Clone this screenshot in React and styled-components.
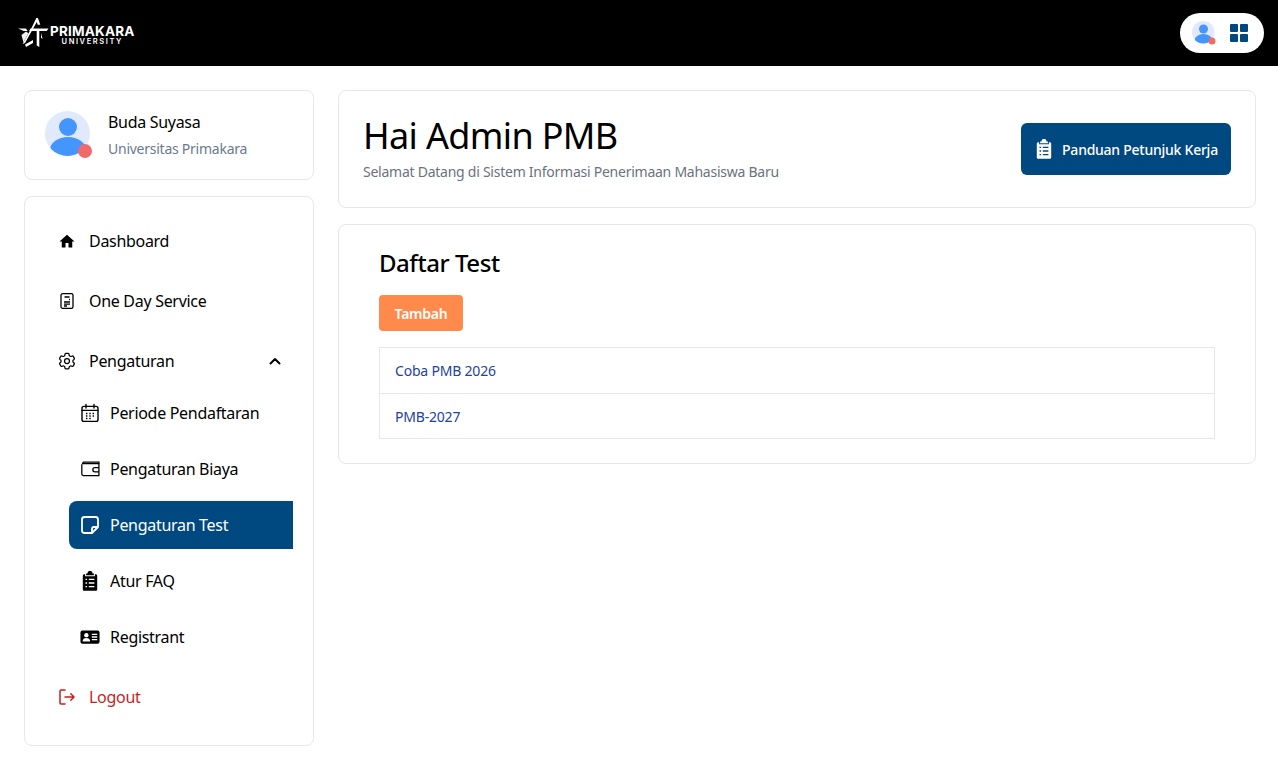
import React from 'react';
import styled, { createGlobalStyle } from 'styled-components';

const GlobalStyle = createGlobalStyle`
  * { box-sizing: border-box; }
  html, body { margin: 0; padding: 0; background: #fff; }
  body { font-family: "Noto Sans", "Liberation Sans", sans-serif; color: #000; }
`;

const TopBar = styled.header`
  height: 66px;
  background: #000;
  display: flex;
  align-items: center;
  justify-content: space-between;
  padding: 0 14px 0 18px;
`;

const Logo = styled.div`
  display: flex;
  align-items: center;
  gap: 1px;
  color: #fff;
`;

const LogoWords = styled.div`
  display: flex;
  flex-direction: column;
  align-items: center;
  margin-top: 3px;
`;

const LogoName = styled.span`
  font-family: "Inter", sans-serif;
  font-size: 13.5px;
  line-height: 14px;
  font-weight: 700;
  letter-spacing: 0.2px;
`;

const LogoSub = styled.span`
  font-family: "Inter", sans-serif;
  font-size: 7.5px;
  line-height: 8px;
  font-weight: 600;
  letter-spacing: 1.6px;
`;

const TopPill = styled.div`
  width: 84px;
  height: 40px;
  background: #fff;
  border-radius: 20px;
  display: flex;
  align-items: center;
  gap: 14px;
  padding-left: 12px;
`;

const Page = styled.main`
  display: grid;
  grid-template-columns: 290px 1fr;
  gap: 24px;
  padding: 24px 22px 17px 24px;
  align-items: start;
`;

const Card = styled.section`
  background: #fff;
  border: 1px solid #e5e7eb;
  border-radius: 8px;
`;

const Side = styled.aside`
  display: flex;
  flex-direction: column;
  gap: 16px;
`;

const ProfileCard = styled(Card)`
  height: 90px;
  display: flex;
  align-items: center;
  gap: 15px;
  padding: 0 20px;
`;

const ProfileName = styled.div`
  font-size: 16px;
  line-height: 24px;
  letter-spacing: -0.3px;
  margin-bottom: 3px;
`;

const ProfileOrg = styled.div`
  font-size: 14px;
  line-height: 24px;
  letter-spacing: -0.25px;
  color: #6b7a8f;
`;

const NavCard = styled(Card)`
  height: 550px;
  padding: 20px 20px 0 32px;
`;

const NavItem = styled.div`
  height: 48px;
  margin-bottom: 12px;
  display: flex;
  align-items: center;
  gap: 12px;
  font-size: 16px;
  letter-spacing: -0.3px;
  color: ${p => (p.$danger ? '#c81e1e' : '#000')};
`;

const NavChevron = styled.span`
  margin-left: auto;
  display: flex;
  margin-right: 11px;
`;

const SubNav = styled.div`
  margin: -8px 0 12px 12px;
  display: flex;
  flex-direction: column;
  gap: 8px;
`;

const SubItem = styled.div`
  height: 48px;
  display: flex;
  align-items: center;
  gap: 10px;
  padding-left: 11px;
  font-size: 16px;
  letter-spacing: -0.3px;
  border-radius: 8px 0 0 8px;
  color: ${p => (p.$active ? '#fff' : '#000')};
  background: ${p => (p.$active ? '#004880' : 'transparent')};
`;

const IconBox = styled.span`
  width: 20px;
  height: 20px;
  flex: none;
  display: flex;
  align-items: center;
  justify-content: center;
`;

const Content = styled.div`
  display: flex;
  flex-direction: column;
  gap: 16px;
`;

const HeroCard = styled(Card)`
  height: 118px;
  display: flex;
  align-items: center;
  justify-content: space-between;
  padding: 0 24px;
`;

const HeroTitle = styled.h1`
  margin: 0 0 6px;
  font-size: 36px;
  line-height: 40px;
  font-weight: 400;
  letter-spacing: -0.65px;
`;

const HeroText = styled.p`
  margin: 0;
  font-size: 14px;
  line-height: 20px;
  letter-spacing: -0.25px;
  color: #6b7280;
`;

const GuideButton = styled.button`
  width: 210px;
  height: 52px;
  border: 0;
  border-radius: 6px;
  background: #004880;
  color: #fff;
  font: 500 14px "Noto Sans", sans-serif;
  letter-spacing: -0.25px;
  display: flex;
  align-items: center;
  justify-content: center;
  gap: 8px;
`;

const ListCard = styled(Card)`
  padding: 22px 40px 24px;
`;

const ListTitle = styled.h2`
  margin: 0 0 16px;
  font-size: 24px;
  line-height: 32px;
  font-weight: 500;
  letter-spacing: -0.45px;
`;

const AddButton = styled.button`
  display: block;
  width: 84px;
  height: 36px;
  border: 0;
  border-radius: 4px;
  background: #ff8a4c;
  color: #fff;
  font: 600 14px "Noto Sans", sans-serif;
  letter-spacing: -0.25px;
  margin-bottom: 16px;
`;

const TestList = styled.ul`
  list-style: none;
  margin: 0;
  padding: 0;
  border: 1px solid #e5e7eb;
`;

const TestRow = styled.li`
  height: 45px;
  padding: 0 15px;
  display: flex;
  align-items: center;
  font-size: 14px;
  letter-spacing: -0.2px;
  color: #1e429f;
  & + & { border-top: 1px solid #e5e7eb; height: 45px; }
`;

const StarMark = () => (
  <svg width="31" height="31" viewBox="0 0 31 31" fill="#fff">
    <path d="M0 10.5h8l1.6 2.6-3.7 0z" />
    <path d="M3.5 17l4.5-3.6 2.4 1.8-5 9z" opacity="0.95" />
    <path d="M4.5 26l9.5-17L18.3 0h1.6l2.4 6.8h-2.6L18.8 4 7 25z" />
    <path d="M12.5 10.5h18l-1.8 2.6h-7.4V29l-2.6-1.6V13.1h-7.6z" />
    <path d="M23 15l1.6 6-1.6-1.2z" />
    <path d="M7 26.5l8-4.6v3L8 29z" />
  </svg>
);

const Avatar = ({ size }) => (
  <svg width={size} height={size} viewBox="0 0 48 48">
    <defs>
      <clipPath id={`avatar-${size}`}>
        <circle cx="22.5" cy="22.5" r="22.5" />
      </clipPath>
    </defs>
    <circle cx="22.5" cy="22.5" r="22.5" fill="#e1e9fd" />
    <g clipPath={`url(#avatar-${size})`}>
      <circle cx="23" cy="16" r="9" fill="#4595ff" />
      <ellipse cx="23" cy="39" rx="18" ry="13" fill="#4595ff" />
    </g>
    <circle cx="40" cy="40" r="7" fill="#f16a6a" />
  </svg>
);

const AppsIcon = () => (
  <svg width="18" height="18" viewBox="0 0 18 18" fill="#004880">
    <rect x="0" y="0" width="8" height="8" rx="1" />
    <rect x="10" y="0" width="8" height="8" rx="1" />
    <rect x="0" y="10" width="8" height="8" rx="1" />
    <rect x="10" y="10" width="8" height="8" rx="1" />
  </svg>
);

const HomeIcon = () => (
  <svg width="18" height="18" viewBox="0 0 24 24" fill="#000">
    <path d="M10 20.5v-6h4v6h5v-8h3L12 3.5 2 12.5h3v8z" />
  </svg>
);

const DocIcon = () => (
  <svg width="18" height="18" viewBox="0 0 18 18" fill="none" stroke="#000" strokeWidth="1.3">
    <rect x="3" y="1.7" width="12" height="14.6" rx="1.6" />
    <path d="M6.5 5h5M11 7.5h1M6 10h6M6 12.2h6M6 14h3" />
  </svg>
);

const GearIcon = () => (
  <svg width="20" height="20" viewBox="0 0 24 24" fill="none" stroke="#000" strokeWidth="1.5" strokeLinecap="round" strokeLinejoin="round">
    <path d="M9.6 3.9c.1-.6.6-1 1.2-1h2.4c.6 0 1.1.4 1.2 1l.2 1.2c.1.4.4.7.7.9l.5.3c.3.2.7.2 1.1.1l1.2-.4c.5-.2 1.1 0 1.4.5l1.2 2.1c.3.5.2 1.1-.2 1.5l-1 .8c-.3.2-.4.6-.4 1v.6c0 .4.2.8.4 1l1 .8c.4.4.5 1 .2 1.5l-1.2 2.1c-.3.5-.9.7-1.4.5l-1.2-.4c-.4-.1-.8-.1-1.1.1l-.5.3c-.3.2-.6.5-.7.9l-.2 1.2c-.1.6-.6 1-1.2 1h-2.4c-.6 0-1.1-.4-1.2-1l-.2-1.2c-.1-.4-.4-.7-.7-.9l-.5-.3c-.3-.2-.7-.2-1.1-.1l-1.2.4c-.5.2-1.1 0-1.4-.5l-1.2-2.1c-.3-.5-.2-1.1.2-1.5l1-.8c.3-.2.4-.6.4-1v-.6c0-.4-.2-.8-.4-1l-1-.8c-.4-.4-.5-1-.2-1.5l1.2-2.1c.3-.5.9-.7 1.4-.5l1.2.4c.4.1.8.1 1.1-.1l.5-.3c.3-.2.6-.5.7-.9z" />
    <circle cx="12" cy="12" r="3" />
  </svg>
);

const ChevronUp = () => (
  <svg width="14" height="14" viewBox="0 0 14 14" fill="none" stroke="#000" strokeWidth="2" strokeLinecap="round" strokeLinejoin="round">
    <path d="M2.5 9.5 7 5l4.5 4.5" />
  </svg>
);

const CalendarIcon = () => (
  <svg width="20" height="20" viewBox="0 0 20 20" fill="none" stroke="#000" strokeWidth="1.4">
    <rect x="2" y="3.4" width="16" height="15" rx="2" />
    <path d="M2 7.4h16M6 1.4v3.6M14 1.4v3.6" strokeLinecap="round" />
    <path d="M6 10.4h1.4M9.3 10.4h1.4M12.6 10.4h1.4M6 13h1.4M9.3 13h1.4M12.6 13h1.4M6 15.6h1.4M9.3 15.6h1.4" strokeWidth="1.5" />
  </svg>
);

const WalletIcon = () => (
  <svg width="22" height="20" viewBox="0 0 22 20" fill="none" stroke="#000" strokeWidth="1.4">
    <path d="M2.5 4.2h18.3v13H3.6a1.6 1.6 0 0 1-1.6-1.6V4.8" />
    <path d="M2.5 4.2 3.8 2.4h17v1.8" />
    <path d="M20.8 8.6h-4.4a2 2 0 0 0 0 4.6h4.4" />
  </svg>
);

const NoteIcon = () => (
  <svg width="20" height="20" viewBox="0 0 20 20" fill="none" stroke="#fff" strokeWidth="1.8" strokeLinejoin="round">
    <path d="M4.5 2h11A2.5 2.5 0 0 1 18 4.5V12l-6 6H4.5A2.5 2.5 0 0 1 2 15.5v-11A2.5 2.5 0 0 1 4.5 2z" />
    <path d="M18 12h-4a2 2 0 0 0-2 2v4" />
  </svg>
);

const ClipboardIcon = ({ color = '#000', size = 20 }) => (
  <svg width={size} height={size} viewBox="0 0 20 20">
    <path
      fill={color}
      d="M7.5 2.4a2.5 2.5 0 0 1 5 0h1.4v1.8H6.1V2.4zM4.4 3.2h.7V5.2h9.8V3.2h.7c.9 0 1.6.7 1.6 1.6v13.4c0 .9-.7 1.6-1.6 1.6H4.4c-.9 0-1.6-.7-1.6-1.6V4.8c0-.9.7-1.6 1.6-1.6z"
    />
    <g fill="none" stroke={color === '#fff' ? '#004880' : '#fff'} strokeWidth="1.4">
      <path d="M5.5 8.4h1.6M8.8 8.4h5.6M5.5 12h1.6M8.8 12h5.6M5.5 15.6h1.6M8.8 15.6h5.6" />
    </g>
  </svg>
);

const IdCardIcon = () => (
  <svg width="22" height="20" viewBox="0 0 22 20">
    <rect x="0.5" y="2.8" width="21" height="14.6" rx="2.2" fill="#000" />
    <circle cx="7" cy="8" r="2.4" fill="#fff" />
    <path d="M2.8 15c0-2.8 1.9-4 4.2-4s4.2 1.2 4.2 4z" fill="#fff" />
    <path d="M13 7h6M13 10h6M13 13h6" stroke="#fff" strokeWidth="1.4" />
  </svg>
);

const LogoutIcon = () => (
  <svg width="18" height="18" viewBox="0 0 18 18" fill="none" stroke="#c81e1e" strokeWidth="1.5" strokeLinecap="round" strokeLinejoin="round">
    <path d="M7 2H3.2C2.5 2 2 2.5 2 3.2v11.6c0 .7.5 1.2 1.2 1.2H7" />
    <path d="M7 9h9M12.8 5.8 16 9l-3.2 3.2" />
  </svg>
);

const subMenu = [
  { label: 'Periode Pendaftaran', icon: <CalendarIcon /> },
  { label: 'Pengaturan Biaya', icon: <WalletIcon /> },
  { label: 'Pengaturan Test', icon: <NoteIcon />, active: true },
  { label: 'Atur FAQ', icon: <ClipboardIcon /> },
  { label: 'Registrant', icon: <IdCardIcon /> },
];

const tests = ['Coba PMB 2026', 'PMB-2027'];

function App() {
  return (
    <>
      <GlobalStyle />
      <TopBar>
        <Logo>
          <StarMark />
          <LogoWords>
            <LogoName>PRIMAKARA</LogoName>
            <LogoSub>UNIVERSITY</LogoSub>
          </LogoWords>
        </Logo>
        <TopPill>
          <Avatar size={24} />
          <AppsIcon />
        </TopPill>
      </TopBar>
      <Page>
        <Side>
          <ProfileCard>
            <Avatar size={48} />
            <div>
              <ProfileName>Buda Suyasa</ProfileName>
              <ProfileOrg>Universitas Primakara</ProfileOrg>
            </div>
          </ProfileCard>
          <NavCard>
            <NavItem><IconBox><HomeIcon /></IconBox>Dashboard</NavItem>
            <NavItem><IconBox><DocIcon /></IconBox>One Day Service</NavItem>
            <NavItem>
              <IconBox><GearIcon /></IconBox>
              Pengaturan
              <NavChevron><ChevronUp /></NavChevron>
            </NavItem>
            <SubNav>
              {subMenu.map(item => (
                <SubItem key={item.label} $active={item.active}>
                  <IconBox>{item.icon}</IconBox>
                  {item.label}
                </SubItem>
              ))}
            </SubNav>
            <NavItem $danger><IconBox><LogoutIcon /></IconBox>Logout</NavItem>
          </NavCard>
        </Side>
        <Content>
          <HeroCard>
            <div>
              <HeroTitle>Hai Admin PMB</HeroTitle>
              <HeroText>Selamat Datang di Sistem Informasi Penerimaan Mahasiswa Baru</HeroText>
            </div>
            <GuideButton>
              <ClipboardIcon color="#fff" />
              Panduan Petunjuk Kerja
            </GuideButton>
          </HeroCard>
          <ListCard>
            <ListTitle>Daftar Test</ListTitle>
            <AddButton>Tambah</AddButton>
            <TestList>
              {tests.map(name => <TestRow key={name}>{name}</TestRow>)}
            </TestList>
          </ListCard>
        </Content>
      </Page>
    </>
  );
}

export default App;
